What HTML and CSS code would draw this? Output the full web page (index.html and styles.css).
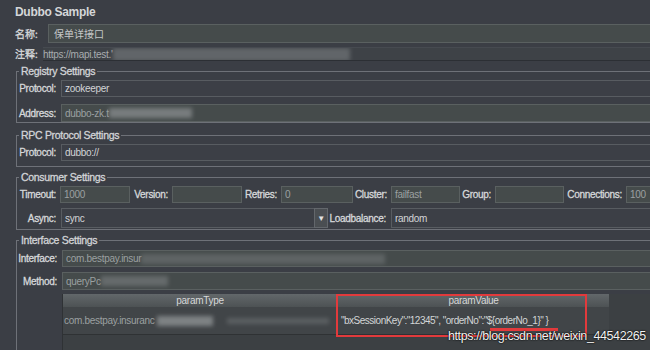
FILE: index.html
```html
<!DOCTYPE html>
<html lang="zh">
<head>
    <meta charset="UTF-8">
    <title>Dubbo Sample</title>
    <link rel="stylesheet" href="styles.css">
</head>
<body>
    <div class="title">Dubbo Sample</div>

    <div class="row name-row">
        <span class="lbl cjk">名称:</span>
        <div class="field soft"><span class="cjk">保单详接口</span></div>
    </div>
    <div class="row note-row">
        <span class="lbl cjk">注释:</span>
        <div class="field note">https://mapi.test.'<span class="blur blur-note"></span></div>
    </div>

    <fieldset class="group registry">
        <legend>Registry Settings</legend>
        <div class="rows">
            <div class="row h17"><span class="lbl">Protocol:</span><div class="field">zookeeper</div></div>
            <div class="row h18"><span class="lbl">Address:</span><div class="field soft dim">dubbo-zk.t<span class="blur blur-addr"></span></div></div>
        </div>
    </fieldset>

    <fieldset class="group rpc">
        <legend>RPC Protocol Settings</legend>
        <div class="rows">
            <div class="row h17"><span class="lbl">Protocol:</span><div class="field">dubbo://</div></div>
        </div>
    </fieldset>

    <fieldset class="group consumer">
        <legend>Consumer Settings</legend>
        <div class="rows">
            <div class="consumer-line">
                <span class="lbl">Timeout:</span><div class="field soft dim box">1000</div>
                <span class="lbl">Version:</span><div class="field soft box"></div>
                <span class="lbl">Retries:</span><div class="field soft dim box">0</div>
                <span class="lbl">Cluster:</span><div class="field soft dim box">failfast</div>
                <span class="lbl">Group:</span><div class="field soft box"></div>
                <span class="lbl">Connections:</span><div class="field soft dim">100</div>
            </div>
            <div class="combo-line">
                <span class="lbl">Async:</span>
                <div class="field combo">sync</div>
                <div class="arrow">&#9660;</div>
                <span class="lbl">Loadbalance:</span>
                <div class="field">random</div>
            </div>
        </div>
    </fieldset>

    <fieldset class="group iface">
        <legend>Interface Settings</legend>
        <div class="rows">
            <div class="row h17"><span class="lbl">Interface:</span><div class="field soft dim">com.bestpay.insur<span class="blur blur-iface"></span></div></div>
            <div class="row h18"><span class="lbl">Method:</span><div class="field soft dim">queryPc<span class="blur blur-method"></span></div></div>
        </div>
        <div class="table-pane">
            <div class="thead">
                <div class="col1">paramType</div>
                <div class="col2">paramValue</div>
            </div>
            <div class="trow">
                <div class="col1 dim">com.bestpay.insuranc<span class="blur blur-type"></span><span class="blur blur-type2"></span></div>
                <div class="col2">"bxSessionKey":"12345", "orderNo":"${orderNo_1}" }</div>
            </div>
            <div class="mark-box"></div>
            <div class="mark-line"></div>
        </div>
    </fieldset>

    <div class="watermark">https://blog.csdn.net/weixin_44542265</div>
</body>
</html>
```

FILE: styles.css
```css
* {
    box-sizing: border-box;
}
html, body {
    overflow: hidden;
}
body {
    margin: 0;
    width: 650px;
    height: 350px;
    position: relative;
    background: #3b3e45;
    color: #cdd0d2;
    font-family: "Liberation Sans", Arial, "Noto Sans CJK SC", sans-serif;
    font-size: 10px;
    letter-spacing: -0.3px;
}
.cjk {
    font-family: "Noto Sans CJK SC", "Liberation Sans", sans-serif;
    font-size: 10px;
    letter-spacing: 0;
}
.title {
    height: 24px;
    line-height: 24px;
    padding-left: 15px;
    font-size: 12px;
    font-weight: bold;
    color: #d4d6d8;
}

.row {
    display: flex;
}
.h17 { height: 17px; }
.h18 { height: 18px; }
.lbl {
    flex: none;
    display: flex;
    align-items: center;
    justify-content: flex-end;
    padding-right: 5px;
    color: #d6d8da;
    -webkit-text-stroke: 0.3px #d6d8da;
    white-space: nowrap;
}
.field {
    flex: 1;
    display: flex;
    align-items: center;
    padding-left: 3px;
    background: #3c3f46;
    border: 1px solid #585c61;
    border-right: 0;
    color: #d2d4d6;
    white-space: nowrap;
    overflow: hidden;
}
.field.soft {
    background: #454b4b;
    border-color: #5a6060;
}
.field.dim, .dim {
    color: #9ba0a1;
}
.field.box {
    border-right: 1px solid #5a6060;
}

.name-row {
    height: 19px;
}
.name-row .lbl {
    width: 48px;
    padding-left: 15px;
    justify-content: flex-start;
}
.name-row .field {
    padding-left: 5px;
    color: #c4c7c8;
}
.note-row {
    height: 17px;
    margin-top: 2px;
}
.note-row .lbl {
    width: 43px;
    padding-left: 15px;
    justify-content: flex-start;
}
.note-row .field {
    margin: 2px 0 1px;
    padding-left: 0;
    border: 0;
    border-top: 1px solid #464a50;
    border-bottom: 1px solid #2c2f34;
    background: #3e4247;
    color: #a9adb0;
}

.group {
    margin: 3px -6px 0 16px;
    padding: 0 0 0 1px;
    border: 1px solid #6e7178;
    min-inline-size: 0;
}
.group legend {
    margin-left: 1px;
    padding: 0 2px;
    font-size: 10.5px;
    line-height: 13px;
    color: #d2d4d7;
    -webkit-text-stroke: 0.3px #d2d4d7;
}
.group .lbl {
    width: 43px;
}
.rows {
    display: flex;
    flex-direction: column;
    gap: 7px;
    padding-top: 2px;
}
.rpc {
    margin-top: 6px;
    padding-bottom: 5px;
}
.consumer {
    margin-top: 4px;
    padding-bottom: 1px;
}
.consumer .rows {
    gap: 5px;
}
.iface {
    margin-top: 4px;
}
.iface .rows {
    gap: 5px;
    padding-top: 3px;
}
.iface .lbl {
    width: 44px;
}

.consumer-line {
    display: grid;
    grid-template-columns: 42px 70px 42px 70px 39px 72px 38px 69px 35px 69px 62px 1fr;
    height: 17px;
}
.consumer-line .lbl, .combo-line .lbl {
    width: auto;
    padding-right: 4px;
}
.combo-line {
    display: grid;
    grid-template-columns: 43px 253px 14px 63px 1fr;
    height: 20px;
}
.combo-line .lbl {
    padding-right: 5px;
}
.combo {
    border-right: 0;
}
.arrow {
    display: flex;
    align-items: center;
    justify-content: center;
    background: #4a4e52;
    border: 1px solid #63676c;
    font-size: 8px;
    color: #e2e2e2;
}

.blur {
    display: inline-block;
    height: 10px;
    background: #8d9193;
    opacity: 0.55;
    filter: blur(2px);
}
.blur-note { width: 237px; height: 13px; opacity: 0.45; }
.blur-addr { width: 83px; opacity: 0.7; }
.blur-iface { width: 244px; opacity: 0.35; }
.blur-method { width: 67px; opacity: 0.45; }
.blur-type { width: 56px; margin-left: 2px; opacity: 0.8; }
.blur-type2 { width: 102px; height: 6px; margin-left: 14px; opacity: 0.35; }

.table-pane {
    position: relative;
    margin: 4px 0 0 44px;
    height: 56px;
    background: #3c4043;
    border-left: 1px solid #2f3235;
}
.thead, .trow {
    display: flex;
    width: 546px;
}
.thead {
    height: 13px;
    line-height: 13px;
    background: linear-gradient(#62676a, #4d5254);
    color: #d6d8d9;
    text-align: center;
}
.thead .col2 {
    border-left: 1px solid #45494c;
}
.trow {
    height: 28px;
    line-height: 28px;
    background: #414548;
    border-bottom: 1px solid #2f3234;
    white-space: nowrap;
}
.trow .col1 {
    display: flex;
    align-items: center;
    padding-left: 1px;
}
.trow .col2 {
    padding-left: 4px;
    color: #d3d5d6;
    letter-spacing: -0.5px;
}
.col1 { width: 274px; }
.col2 { width: 272px; }
.mark-box {
    position: absolute;
    left: 273px;
    top: 0;
    width: 251px;
    height: 43px;
    border: 2px solid #e23a3c;
}
.mark-line {
    position: absolute;
    left: 427px;
    top: 34px;
    width: 68px;
    height: 3px;
    background: #e23a3c;
}

.watermark {
    position: absolute;
    left: 448px;
    top: 329px;
    font-size: 12.5px;
    letter-spacing: -0.4px;
    color: #f2f2f2;
    text-shadow: 0 0 2px #000, 0 0 1px #000;
}
```
